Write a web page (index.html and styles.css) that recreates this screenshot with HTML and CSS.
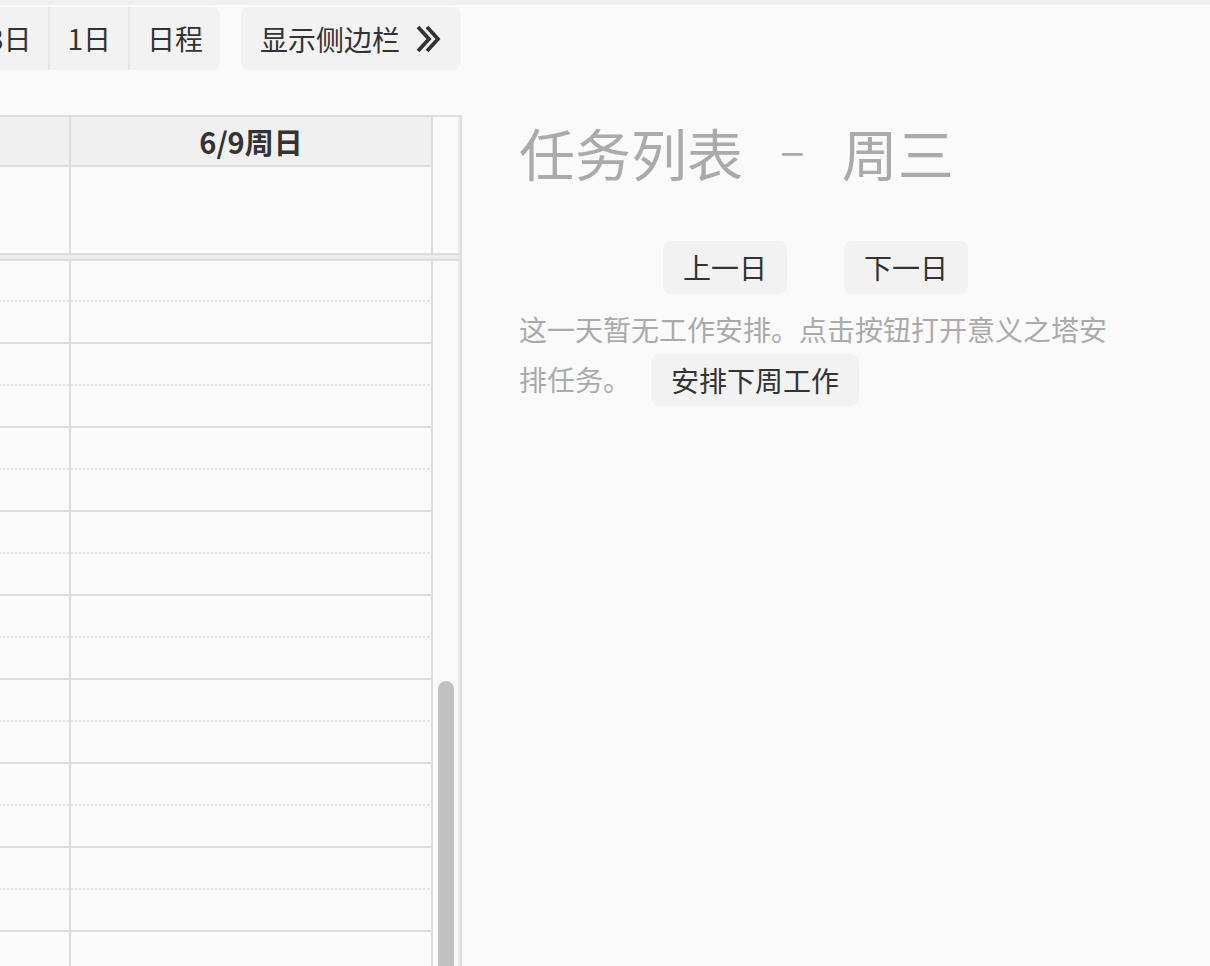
FILE: index.html
```html
<!DOCTYPE html>
<html lang="zh-CN">
<head>
<meta charset="utf-8">
<title>任务列表</title>
<link rel="stylesheet" href="styles.css">
</head>
<body>
<div class="topstrip"></div>
<div class="main">
  <div class="left">
    <div class="toolbar">
      <div class="btn-group">
        <button class="gbtn">月</button>
        <button class="gbtn">周</button>
        <button class="gbtn">3日</button>
        <button class="gbtn">1日</button>
        <button class="gbtn">日程</button>
      </div>
      <button class="side-toggle">显示侧边栏
        <svg class="chev" width="26" height="28" viewBox="0 0 26 28" aria-hidden="true">
          <polyline points="2,2 13,14 2,26" fill="none" stroke="#333" stroke-width="3.8" stroke-linejoin="miter"/>
          <polyline points="11,2 22,14 11,26" fill="none" stroke="#333" stroke-width="3.8" stroke-linejoin="miter"/>
        </svg>
      </button>
    </div>
    <div class="cal">
      <div class="row head">
        <div class="cell prev">6/8周六</div>
        <div class="cell day">6/9周日</div>
        <div class="gutter"></div>
      </div>
      <div class="row allday">
        <div class="cell prev"></div>
        <div class="cell day"></div>
        <div class="gutter"></div>
      </div>
      <div class="divider"></div>
      <div class="row timegrid">
        <div class="slots">
          <div class="slot-list">
            <div class="slot half"></div><div class="slot"></div>
            <div class="slot half"></div><div class="slot"></div>
            <div class="slot half"></div><div class="slot"></div>
            <div class="slot half"></div><div class="slot"></div>
            <div class="slot half"></div><div class="slot"></div>
            <div class="slot half"></div><div class="slot"></div>
            <div class="slot half"></div><div class="slot"></div>
            <div class="slot half"></div><div class="slot"></div>
            <div class="slot half"></div><div class="slot"></div>
            <div class="slot half"></div><div class="slot"></div>
          </div>
          <div class="vline v1"></div>
          <div class="vline v2"></div>
        </div>
        <div class="gutter track">
          <div class="thumb"></div>
        </div>
      </div>
    </div>
  </div>
  <div class="side">
    <h1 class="title">任务列表<span class="sep">–</span>周三</h1>
    <div class="nav">
      <button class="btn">上一日</button>
      <button class="btn">下一日</button>
    </div>
    <p class="empty">这一天暂无工作安排。点击按钮打开意义之塔安排任务。<button class="btn inline">安排下周工作</button></p>
  </div>
</div>
</body>
</html>
```
FILE: styles.css
```css
html, body {
  margin: 0;
  padding: 0;
}
body {
  background: #fafafa;
  font-family: "Noto Sans CJK SC", "Noto Sans", sans-serif;
  color: #333;
  overflow: hidden;
  height: 966px;
}
button {
  font-family: inherit;
  border: none;
  cursor: pointer;
}
.topstrip {
  height: 5px;
  background: #f0f0f0;
}
.main {
  display: flex;
  align-items: flex-start;
}
.left {
  width: 462px;
  flex-shrink: 0;
  overflow: hidden;
  display: flex;
  flex-direction: column;
  align-items: flex-end;
  height: 961px;
}
.toolbar {
  display: flex;
  gap: 21px;
  margin-top: 2px;
  margin-right: 1px;
  height: 63px;
  flex-shrink: 0;
}
.btn-group {
  display: flex;
  flex-shrink: 0;
  background: #f2f2f2;
  border-radius: 8px;
}
.gbtn {
  flex-shrink: 0;
  white-space: nowrap;
  background: transparent;
  font-size: 28px;
  line-height: 63px;
  padding: 0 17px;
  color: #333;
  border-left: 2px solid #e6e6e6;
}
.gbtn:first-child {
  border-left: none;
}
.side-toggle {
  flex-shrink: 0;
  white-space: nowrap;
  display: flex;
  align-items: center;
  gap: 16px;
  background: #f2f2f2;
  border-radius: 8px;
  font-size: 28px;
  color: #333;
  padding: 0 19px 0 19px;
  height: 63px;
}
.chev {
  display: block;
  flex-shrink: 0;
}
.cal {
  margin-top: 45px;
  width: 900px;
  flex-shrink: 0;
  border-top: 2px solid #dddddd;
  border-left: 2px solid #dddddd;
  border-right: 2px solid #dddddd;
}
.row {
  display: flex;
}
.cell {
  border-right: 2px solid #dddddd;
}
.prev {
  flex: 1;
}
.day {
  width: 360px;
  flex-shrink: 0;
}
.gutter {
  width: 25px;
  flex-shrink: 0;
  border-right: 2px solid #ececec;
  background: #fafafa;
}
.head .cell {
  background: #f0f0f0;
  height: 48px;
  border-bottom: 2px solid #dddddd;
  font-size: 29px;
  font-weight: 700;
  line-height: 48px;
  text-align: center;
  color: #333;
  white-space: nowrap;
}
.allday .cell {
  height: 86px;
}
.divider {
  height: 4px;
  background: #ececec;
  border-top: 2px solid #dddddd;
  border-bottom: 2px solid #dddddd;
}
.slots {
  flex: 1;
  display: grid;
  grid-template-columns: 1fr 2px 360px 2px;
  grid-template-rows: auto;
}
.slot-list {
  grid-area: 1 / 1 / 2 / 5;
}
.slot {
  height: 40px;
  border-bottom: 2px solid #dddddd;
}
.slot.half {
  border-bottom: 2px dotted #e3e3e3;
}
.slot:first-child {
  height: 39px;
}
.vline {
  background: #dddddd;
}
.v1 {
  grid-area: 1 / 2 / 2 / 3;
}
.v2 {
  grid-area: 1 / 4 / 2 / 5;
}
.track {
  display: flex;
  flex-direction: column;
}
.thumb {
  margin-top: 420px;
  margin-left: 5px;
  width: 16px;
  height: 420px;
  border-radius: 8px 8px 0 0;
  background: #c1c1c1;
}
.side {
  flex: 1;
  padding: 0 98px 0 57px;
}
.title {
  margin: 112px 0 0;
  font-size: 56px;
  line-height: 70px;
  font-weight: 400;
  color: #aaaaaa;
  white-space: nowrap;
}
.sep {
  font-size: 46px;
  line-height: 0;
  margin: 0 37px;
  vertical-align: 9px;
}
.nav {
  display: flex;
  justify-content: center;
  gap: 57px;
  margin-top: 54px;
}
.btn {
  background: #f2f2f2;
  border-radius: 8px;
  font-size: 28px;
  line-height: 30px;
  padding: 11px 20px 12px;
  color: #333;
}
.empty {
  margin: 10px 0 0;
  font-size: 28px;
  line-height: 50px;
  color: #aaaaaa;
}
.btn.inline {
  margin-left: 20px;
  vertical-align: top;
  padding: 11px 20px;
}
```
